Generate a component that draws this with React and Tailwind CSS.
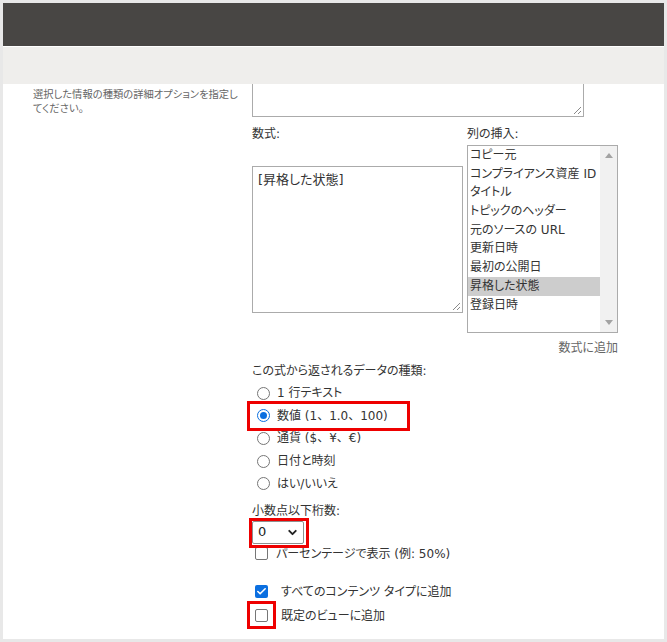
import { ChevronDown, Check } from 'lucide-react';

const FONT = "font-['DejaVu_Sans','Noto_Sans_CJK_JP',sans-serif] [font-feature-settings:'palt'_1]";

const columns = [
  'コピー元',
  'コンプライアンス資産 ID',
  'タイトル',
  'トピックのヘッダー',
  '元のソースの URL',
  '更新日時',
  '最初の公開日',
  '昇格した状態',
  '登録日時',
];

const types = [
  { label: '1 行テキスト', palt: true },
  { label: '数値 (1、1.0、100)' },
  { label: '通貨 ($、¥、€)' },
  { label: '日付と時刻', palt: true },
  { label: 'はい/いいえ', palt: true },
];

function Grip() {
  return (
    <svg className="absolute right-[1px] bottom-[1px]" width="10" height="10" viewBox="0 0 10 10">
      <path d="M9 2 L2 9 M9 6 L6 9" stroke="#8a8a8a" strokeWidth="1" />
    </svg>
  );
}

function Radio({ checked }) {
  return checked ? (
    <span className="w-[13px] h-[13px] rounded-full border-[1.5px] border-[#0b6fe0] bg-white flex items-center justify-center shrink-0">
      <span className="w-[7px] h-[7px] rounded-full bg-[#0b6fe0]" />
    </span>
  ) : (
    <span className="w-[13px] h-[13px] rounded-full border border-[#767676] bg-white shrink-0" />
  );
}

function Box({ checked }) {
  return checked ? (
    <span className="w-[13px] h-[13px] rounded-[2px] bg-[#0b6fe0] flex items-center justify-center shrink-0">
      <Check size={11} strokeWidth={3.5} color="#fff" />
    </span>
  ) : (
    <span className="w-[13px] h-[13px] rounded-[2px] border border-[#767676] bg-white shrink-0" />
  );
}

export default function App() {
  return (
    <div className={`w-[667px] h-[642px] bg-[#e8e8e8] p-[3px] ${FONT}`}>
      <div className="w-full h-full bg-white overflow-hidden flex flex-col">
        <div className="h-[43px] bg-[#484644] shrink-0" />
        <div className="h-px bg-white shrink-0" />
        <div className="h-[37px] bg-[#efeeec] shrink-0" />

        <div className="flex text-[12px] leading-[18px] text-[#333]">
          <div className="w-[249px] shrink-0 pl-[30px] pt-[3px]">
            <p className="text-[10.3px] leading-[14px] text-[#666] whitespace-nowrap">
              選択した情報の種類の詳細オプションを指定し<br />てください。
            </p>
          </div>

          <div className="flex flex-col">
            <div className="relative w-[332px] h-[33px] border-x border-b border-[#ababab]">
              <Grip />
            </div>

            <div className="flex mt-[8px]">
              <div className="w-[215px]">
                <div>数式:</div>
                <div className="relative mt-[23px] w-[211px] h-[147px] border border-[#ababab] px-[5px] pt-[4px] text-[13px]">
                  [昇格した状態]
                  <Grip />
                </div>
              </div>
              <div className="w-[151px]">
                <div>列の挿入:</div>
                <div className="mt-[2px] h-[188px] border border-[#ababab] flex">
                  <div className="flex-1 flex flex-col">
                    {columns.map((c) => (
                      <div
                        key={c}
                        className={`h-[18.7px] leading-[18.7px] pl-[2px] whitespace-nowrap ${c === '昇格した状態' ? 'bg-[#cdcdcd]' : ''}`}
                      >
                        {c}
                      </div>
                    ))}
                  </div>
                  <div className="w-[17px] bg-[#f1f1f1] flex flex-col justify-between items-center py-[7px]">
                    <svg width="8" height="5" viewBox="0 0 8 5"><path d="M4 0 L8 5 L0 5 Z" fill="#a3a3a3" /></svg>
                    <svg width="8" height="5" viewBox="0 0 8 5"><path d="M0 0 L8 0 L4 5 Z" fill="#a3a3a3" /></svg>
                  </div>
                </div>
                <div className="mt-[6px] text-right text-[#666]">数式に追加</div>
              </div>
            </div>

            <div className="mt-[5px]">この式から返されるデータの種類:</div>
            <div className="mt-[2px] flex flex-col">
              {types.map((t, i) => (
                <div key={t.label} className="relative h-[22.6px] flex items-center pl-[5px] gap-[7px]">
                  <Radio checked={i === 1} />
                  <span className={t.palt ? '' : '[font-feature-settings:normal]'}>{t.label}</span>
                  {i === 1 && (
                    <span className="absolute left-[-5px] top-[-4px] w-[163px] h-[30px] border-[3px] border-[#ee0000]" />
                  )}
                </div>
              ))}
            </div>

            <div className="mt-[7px]">小数点以下桁数:</div>
            <div className="relative mt-[1px] w-[52px] h-[23px] border border-[#8f8f8f] rounded-[2px] flex items-center justify-between pl-[5px] pr-[4px] text-[#222] text-[13px]">
              <span>0</span>
              <ChevronDown size={13} strokeWidth={3.5} color="#222" />
              <span className="absolute left-[-4px] top-[-4px] w-[60px] h-[30px] border-[3px] border-[#ee0000]" />
            </div>

            <div className="mt-[1px] h-[18px] flex items-center pl-[3px] gap-[8px]">
              <Box />
              <span>パーセンテージで表示 (例: 50%)</span>
            </div>

            <div className="mt-[20px] h-[18px] flex items-center pl-[3px] gap-[13px]">
              <Box checked />
              <span>すべてのコンテンツ タイプに追加</span>
            </div>

            <div className="relative mt-[6px] h-[18px] flex items-center pl-[3px] gap-[13px]">
              <Box />
              <span>既定のビューに追加</span>
              <span className="absolute left-[-5px] top-[-6px] w-[29px] h-[28px] border-[3px] border-[#ee0000]" />
            </div>
          </div>
        </div>
      </div>
    </div>
  );
}
